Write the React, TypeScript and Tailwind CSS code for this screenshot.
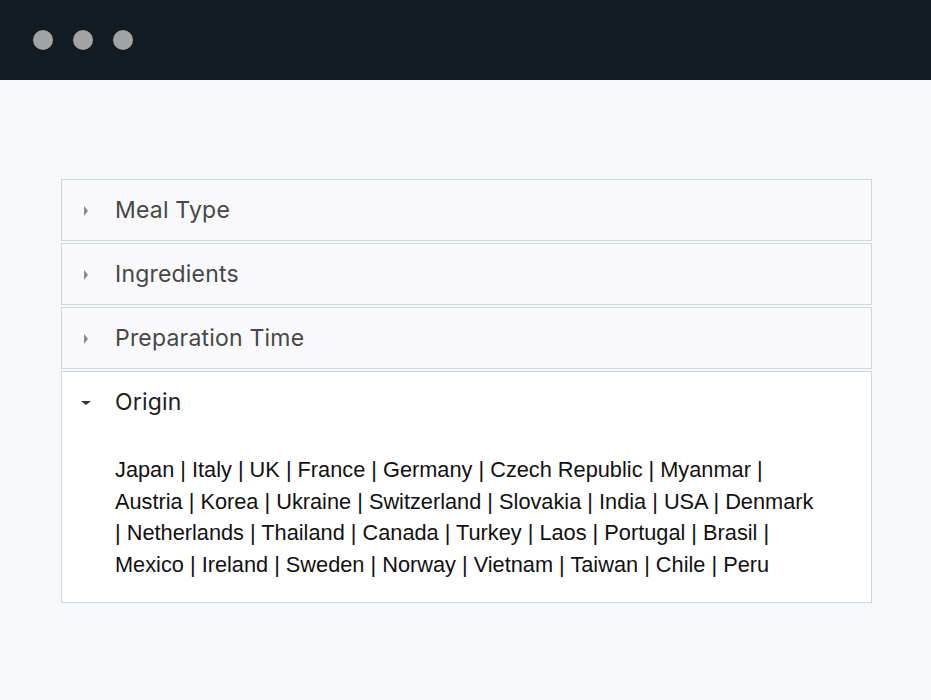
import { useState } from "react";

const COUNTRIES = [
  "Japan", "Italy", "UK", "France", "Germany", "Czech Republic", "Myanmar",
  "Austria", "Korea", "Ukraine", "Switzerland", "Slovakia", "India", "USA", "Denmark",
  "Netherlands", "Thailand", "Canada", "Turkey", "Laos", "Portugal", "Brasil",
  "Mexico", "Ireland", "Sweden", "Norway", "Vietnam", "Taiwan", "Chile", "Peru",
];

const SECTIONS = ["Meal Type", "Ingredients", "Preparation Time", "Origin"];

function Caret({ open }: { open: boolean }) {
  return open ? (
    <svg width="12" height="8" viewBox="0 0 12 8" className="shrink-0">
      <path d="M1 2 L11 2 L6 6 Z" fill="#333" />
    </svg>
  ) : (
    <svg width="8" height="12" viewBox="0 0 8 12" className="shrink-0">
      <path d="M2 1 L6 6 L2 11 Z" fill="#8a8a8e" />
    </svg>
  );
}

export default function App() {
  const [open, setOpen] = useState("Origin");

  return (
    <div className="min-h-[700px] bg-[#f5f9fc] font-['Inter',sans-serif]">
      {/* window chrome */}
      <div className="h-20 bg-[#111b21] flex items-center gap-5 px-[33px]">
        <span className="w-5 h-5 rounded-full bg-[#a1a3a5]" />
        <span className="w-5 h-5 rounded-full bg-[#a1a3a5]" />
        <span className="w-5 h-5 rounded-full bg-[#a1a3a5]" />
      </div>

      <div className="pt-[99px] px-[61px] pr-[59px]">
        <div className="flex flex-col gap-[2px]">
          {SECTIONS.map((name) => {
            const isOpen = open === name;
            return (
              <div
                key={name}
                className={`border border-[#d3d6d9] ${isOpen ? "bg-white" : "bg-[#f9f9fc]"}`}
              >
                <button
                  className="w-full h-[60px] flex items-center text-left pt-[1px]"
                  onClick={() => setOpen(isOpen ? "" : name)}
                >
                  <span className="w-[48px] flex justify-center">
                    <Caret open={isOpen} />
                  </span>
                  <span
                    className={`ml-[5px] text-[23px] tracking-[0.2px] ${isOpen ? "text-[#222]" : "text-[#474747]"}`}
                  >
                    {name}
                  </span>
                </button>
                {isOpen && (
                  <div className="pl-[53px] pr-[52px] pt-[22px] pb-[22px]">
                    <p className="font-['Liberation_Sans',Arial,sans-serif] text-[21.75px] leading-[31.5px] text-[#111]">
                      {COUNTRIES.join(" | ")}
                    </p>
                  </div>
                )}
              </div>
            );
          })}
        </div>
      </div>
    </div>
  );
}
